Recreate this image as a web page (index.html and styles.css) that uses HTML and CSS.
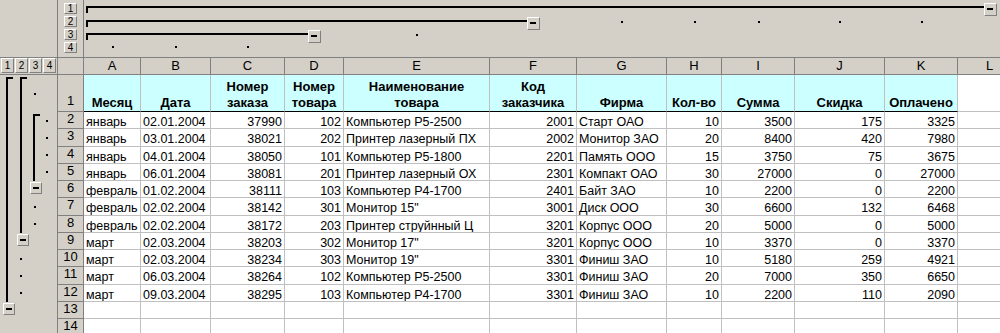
FILE: index.html
```html
<!DOCTYPE html>
<html>
<head>
    <title>Заказы</title>
    <link rel="stylesheet" href="styles.css">
</head>
<body>
    <div class="sheet">
        <div class="top">
            <div class="corner"></div>
            <div class="top-levels">
                <div class="lvl-btn">1</div>
                <div class="lvl-btn">2</div>
                <div class="lvl-btn">3</div>
                <div class="lvl-btn">4</div>
            </div>
            <div class="col-outline">
                <div class="lrow">
                    <div class="hbar s11"></div>
                    <div class="hcell"><i class="ln"></i><b class="mbtn"></b><i class="sp"></i></div>
                </div>
                <div class="lrow">
                    <div class="hbar s5"></div>
                    <div class="hcell"><i class="ln"></i><b class="mbtn"></b><i class="sp"></i></div>
                    <div class="dot"></div>
                    <div class="dot"></div>
                    <div class="dot"></div>
                    <div class="dot"></div>
                    <div class="dot"></div>
                </div>
                <div class="lrow">
                    <div class="hbar s3"></div>
                    <div class="hcell"><i class="ln"></i><b class="mbtn"></b><i class="sp"></i></div>
                    <div class="dot"></div>
                </div>
                <div class="lrow">
                    <div class="dot"></div>
                    <div class="dot"></div>
                    <div class="dot"></div>
                </div>
            </div>
        </div>

        <div class="head-row">
            <div class="row-levels">
                <div class="lvl-btn wide">1</div>
                <div class="lvl-btn wide">2</div>
                <div class="lvl-btn wide">3</div>
                <div class="lvl-btn wide">4</div>
            </div>
            <div class="select-all"></div>
            <div class="col-heads">
                <div>A</div><div>B</div><div>C</div><div>D</div><div>E</div><div>F</div>
                <div>G</div><div>H</div><div>I</div><div>J</div><div>K</div><div>L</div>
            </div>
        </div>

        <div class="body">
            <div class="row-outline">
                <div class="lcol">
                    <div class="vbar s12"></div>
                    <div class="vcell"><b class="mbtn small"></b></div>
                </div>
                <div class="lcol">
                    <div class="vbar s8"></div>
                    <div class="vcell"><b class="mbtn small"></b></div>
                    <div class="dot"></div>
                    <div class="dot"></div>
                    <div class="dot"></div>
                </div>
                <div class="lcol">
                    <div class="dot"></div>
                    <div class="vbar s4"></div>
                    <div class="vcell"><b class="mbtn small"></b></div>
                    <div class="dot"></div>
                    <div class="dot"></div>
                </div>
                <div class="lcol">
                    <div></div>
                    <div class="dot"></div>
                    <div class="dot"></div>
                    <div class="dot"></div>
                    <div class="dot"></div>
                </div>
            </div>
            <div class="cells" id="cells"></div>
        </div>
    </div>

    <script>
        const headers = ["Месяц", "Дата", "Номер<br>заказа", "Номер<br>товара", "Наименование<br>товара",
            "Код<br>заказчика", "Фирма", "Кол-во", "Сумма", "Скидка", "Оплачено"];

        const rows = [
            ["январь", "02.01.2004", 37990, 102, "Компьютер Р5-2500", 2001, "Старт ОАО", 10, 3500, 175, 3325],
            ["январь", "03.01.2004", 38021, 202, "Принтер лазерный ПХ", 2002, "Монитор ЗАО", 20, 8400, 420, 7980],
            ["январь", "04.01.2004", 38050, 101, "Компьютер Р5-1800", 2201, "Память ООО", 15, 3750, 75, 3675],
            ["январь", "06.01.2004", 38081, 201, "Принтер лазерный ОХ", 2301, "Компакт ОАО", 30, 27000, 0, 27000],
            ["февраль", "01.02.2004", 38111, 103, "Компьютер Р4-1700", 2401, "Байт ЗАО", 10, 2200, 0, 2200],
            ["февраль", "02.02.2004", 38142, 301, "Монитор 15\"", 3001, "Диск ООО", 30, 6600, 132, 6468],
            ["февраль", "02.02.2004", 38172, 203, "Принтер струйнный Ц", 3201, "Корпус ООО", 20, 5000, 0, 5000],
            ["март", "02.03.2004", 38203, 302, "Монитор 17\"", 3201, "Корпус ООО", 10, 3370, 0, 3370],
            ["март", "02.03.2004", 38234, 303, "Монитор 19\"", 3301, "Финиш ЗАО", 10, 5180, 259, 4921],
            ["март", "06.03.2004", 38264, 102, "Компьютер Р5-2500", 3301, "Финиш ЗАО", 20, 7000, 350, 6650],
            ["март", "09.03.2004", 38295, 103, "Компьютер Р4-1700", 3301, "Финиш ЗАО", 10, 2200, 110, 2090],
            [], []
        ];

        const cells = document.getElementById("cells");
        let html = '<div class="rh first">1</div>';
        html += headers.map(function(h) {
            return `<div class="c hd">${h}</div>`;
        }).join("");
        html += '<div class="c"></div>';

        rows.forEach(function(row, i) {
            html += `<div class="rh">${i + 2}</div>`;
            for (let j = 0; j < 12; j++) {
                const v = row[j];
                if (v === undefined) {
                    html += '<div class="c"></div>';
                } else if (typeof v === "number") {
                    html += `<div class="c num">${v}</div>`;
                } else {
                    html += `<div class="c">${v.replace(/"/g, "&quot;")}</div>`;
                }
            }
        });
        cells.innerHTML = html;
    </script>
</body>
</html>
```

FILE: styles.css
```css
body {
    margin: 0;
    background-color: #d4d0c8;
    font-family: "Liberation Sans", Arial, sans-serif;
    font-size: 12.5px;
    color: #000;
    overflow: hidden;
}

.sheet {
    --cols: 57px 70px 74px 59px 146px 87px 90px 55px 73px 90px 73px 64px;
    --rows: 37px repeat(13, 17.25px);
    width: 1000px;
    height: 333px;
    overflow: hidden;
}

/* column outline area */
.top {
    display: flex;
    height: 58px;
    border-bottom: 1px solid #808080;
    box-sizing: border-box;
}

.corner {
    flex: none;
    width: 58px;
    border-right: 1px solid #808080;
    box-sizing: border-box;
}

.top-levels {
    flex: none;
    width: 26px;
    border-right: 1px solid #808080;
    box-sizing: border-box;
    display: flex;
    flex-direction: column;
    align-items: center;
    gap: 2px;
    padding-top: 3px;
}

.lvl-btn {
    width: 13px;
    height: 11px;
    box-sizing: border-box;
    border: 1px solid;
    border-color: #fff #808080 #808080 #fff;
    font-size: 10px;
    line-height: 9px;
    text-align: center;
    background-color: #d4d0c8;
}

.lvl-btn.wide {
    height: 15px;
    line-height: 13px;
}

.col-outline {
    flex: none;
    display: flex;
    flex-direction: column;
}

.lrow {
    display: grid;
    grid-template-columns: var(--cols);
    height: 13.5px;
}

.hbar {
    align-self: start;
    margin: 6px 0 0 2px;
    height: 5px;
    border-top: 2px solid #000;
    border-left: 2px solid #000;
}

.hbar.s3 { grid-column: span 3; }
.hbar.s5 { grid-column: span 5; }
.hbar.s11 { grid-column: span 11; }

.hcell {
    display: flex;
    align-items: flex-start;
}

.hcell .ln {
    flex: 1;
    margin-top: 6px;
    border-top: 2px solid #000;
}

.hcell .sp {
    flex: 1;
}

.mbtn {
    display: block;
    position: relative;
    flex: none;
    width: 13px;
    height: 13px;
    margin-top: 3px;
    box-sizing: border-box;
    border: 1px solid;
    border-color: #fff #808080 #808080 #fff;
    background-color: #d4d0c8;
}

.mbtn::after {
    content: "";
    position: absolute;
    left: 2px;
    top: 4px;
    width: 6px;
    height: 2px;
    background-color: #000;
}

.mbtn.small {
    width: 12px;
    height: 12px;
    margin: 1px 0 0 3px;
}

.dot {
    display: flex;
    align-items: center;
    justify-content: center;
}

.dot::after {
    content: "";
    width: 2px;
    height: 2px;
    background-color: #000;
}

/* column headers */
.head-row {
    display: flex;
    height: 17px;
    border-bottom: 1px solid #808080;
    box-sizing: border-box;
}

.row-levels {
    flex: none;
    width: 58px;
    border-right: 1px solid #808080;
    box-sizing: border-box;
    display: flex;
    gap: 1px;
    padding-left: 1px;
}

.select-all {
    flex: none;
    width: 26px;
    border-right: 1px solid #808080;
    box-sizing: border-box;
}

.col-heads {
    flex: none;
    display: grid;
    grid-template-columns: var(--cols);
}

.col-heads div {
    border-right: 1px solid #808080;
    text-align: center;
    font-size: 13px;
    line-height: 16px;
}

/* rows */
.body {
    display: flex;
}

.row-outline {
    flex: none;
    width: 58px;
    border-right: 1px solid #808080;
    box-sizing: border-box;
    display: flex;
}

.lcol {
    flex: none;
    width: 13.5px;
    display: grid;
    grid-template-rows: var(--rows);
}

.vbar {
    justify-self: start;
    margin: 2px 0 0 6px;
    width: 5px;
    border-top: 2px solid #000;
    border-left: 2px solid #000;
}

.vbar.s4 { grid-row: span 4; }
.vbar.s8 { grid-row: span 8; }
.vbar.s12 { grid-row: span 12; }

.cells {
    flex: none;
    display: grid;
    grid-template-columns: 26px var(--cols);
    grid-template-rows: var(--rows);
}

.rh {
    border-right: 1px solid #808080;
    border-bottom: 1px solid #808080;
    text-align: center;
    font-size: 13px;
    line-height: 14px;
    box-sizing: border-box;
}

.rh.first {
    display: flex;
    align-items: flex-end;
    justify-content: center;
    padding-bottom: 3px;
}

.c {
    background-color: #fff;
    border-right: 1px solid #c0c0c0;
    border-bottom: 1px solid #c0c0c0;
    box-sizing: border-box;
    padding: 2px 2px 0;
    line-height: 16px;
    white-space: nowrap;
    overflow: hidden;
}

.num {
    text-align: right;
}

.hd {
    background-color: #ccffff;
    border-bottom-color: #000;
    font-size: 13px;
    font-weight: bold;
    text-align: center;
    display: flex;
    flex-direction: column;
    justify-content: flex-end;
    padding: 0 1px;
}
```
